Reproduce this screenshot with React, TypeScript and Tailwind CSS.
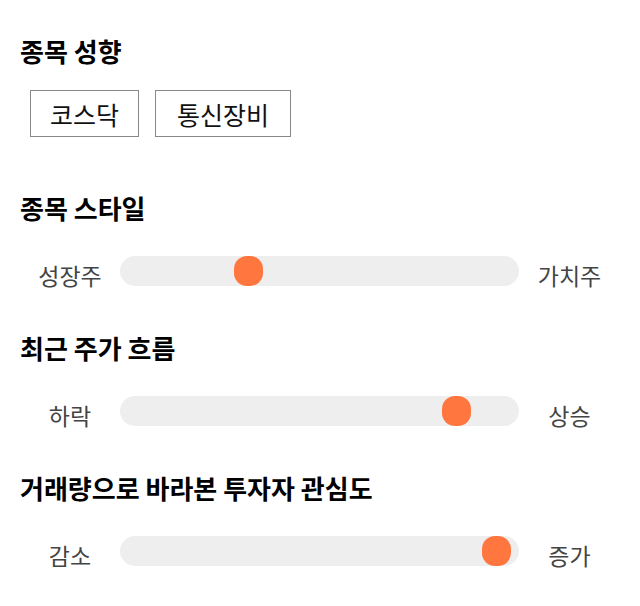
import React from "react";

const font = { fontFamily: '"Noto Sans CJK KR", "Noto Sans", sans-serif' };

function Heading({ children }: { children: React.ReactNode }) {
  return <div className="h-[30px] leading-[30px] text-[26px] font-bold text-black">{children}</div>;
}

function SliderRow({ left, right, value }: { left: string; right: string; value: number }) {
  return (
    <div className="flex items-center h-[30px]">
      <div className="w-[100px] pt-[8px] text-center text-[23px] leading-[30px] text-[#444444]">{left}</div>
      <div className="relative w-[399px] h-[30px] rounded-full bg-[#eeeeee]">
        <div
          className="absolute top-[0px] w-[29px] h-[30px] rounded-[13px] bg-[#ff763f]"
          style={{ left: `${value}px` }}
        />
      </div>
      <div className="w-[101px] pt-[8px] text-center text-[23px] leading-[30px] text-[#444444]">{right}</div>
    </div>
  );
}

export default function App() {
  return (
    <div className="w-[640px] h-[606px] bg-white px-[20px] pt-[36px]" style={font}>
      <Heading>종목 성향</Heading>
      <div className="flex gap-[16px] pl-[10px] mt-[24px]">
        <div className="h-[47px] w-[109px] pt-[2px] border border-[#888888] flex items-center justify-center text-[25px] text-[#111111]">코스닥</div>
        <div className="h-[47px] w-[136px] pt-[2px] border border-[#888888] flex items-center justify-center text-[25px] text-[#111111]">통신장비</div>
      </div>
      <div className="mt-[56px]"><Heading>종목 스타일</Heading></div>
      <div className="mt-[33px]"><SliderRow left="성장주" right="가치주" value={114} /></div>
      <div className="mt-[47px]"><Heading>최근 주가 흐름</Heading></div>
      <div className="mt-[33px]"><SliderRow left="하락" right="상승" value={322} /></div>
      <div className="mt-[47px]"><Heading>거래량으로 바라본 투자자 관심도</Heading></div>
      <div className="mt-[33px]"><SliderRow left="감소" right="증가" value={362} /></div>
    </div>
  );
}
